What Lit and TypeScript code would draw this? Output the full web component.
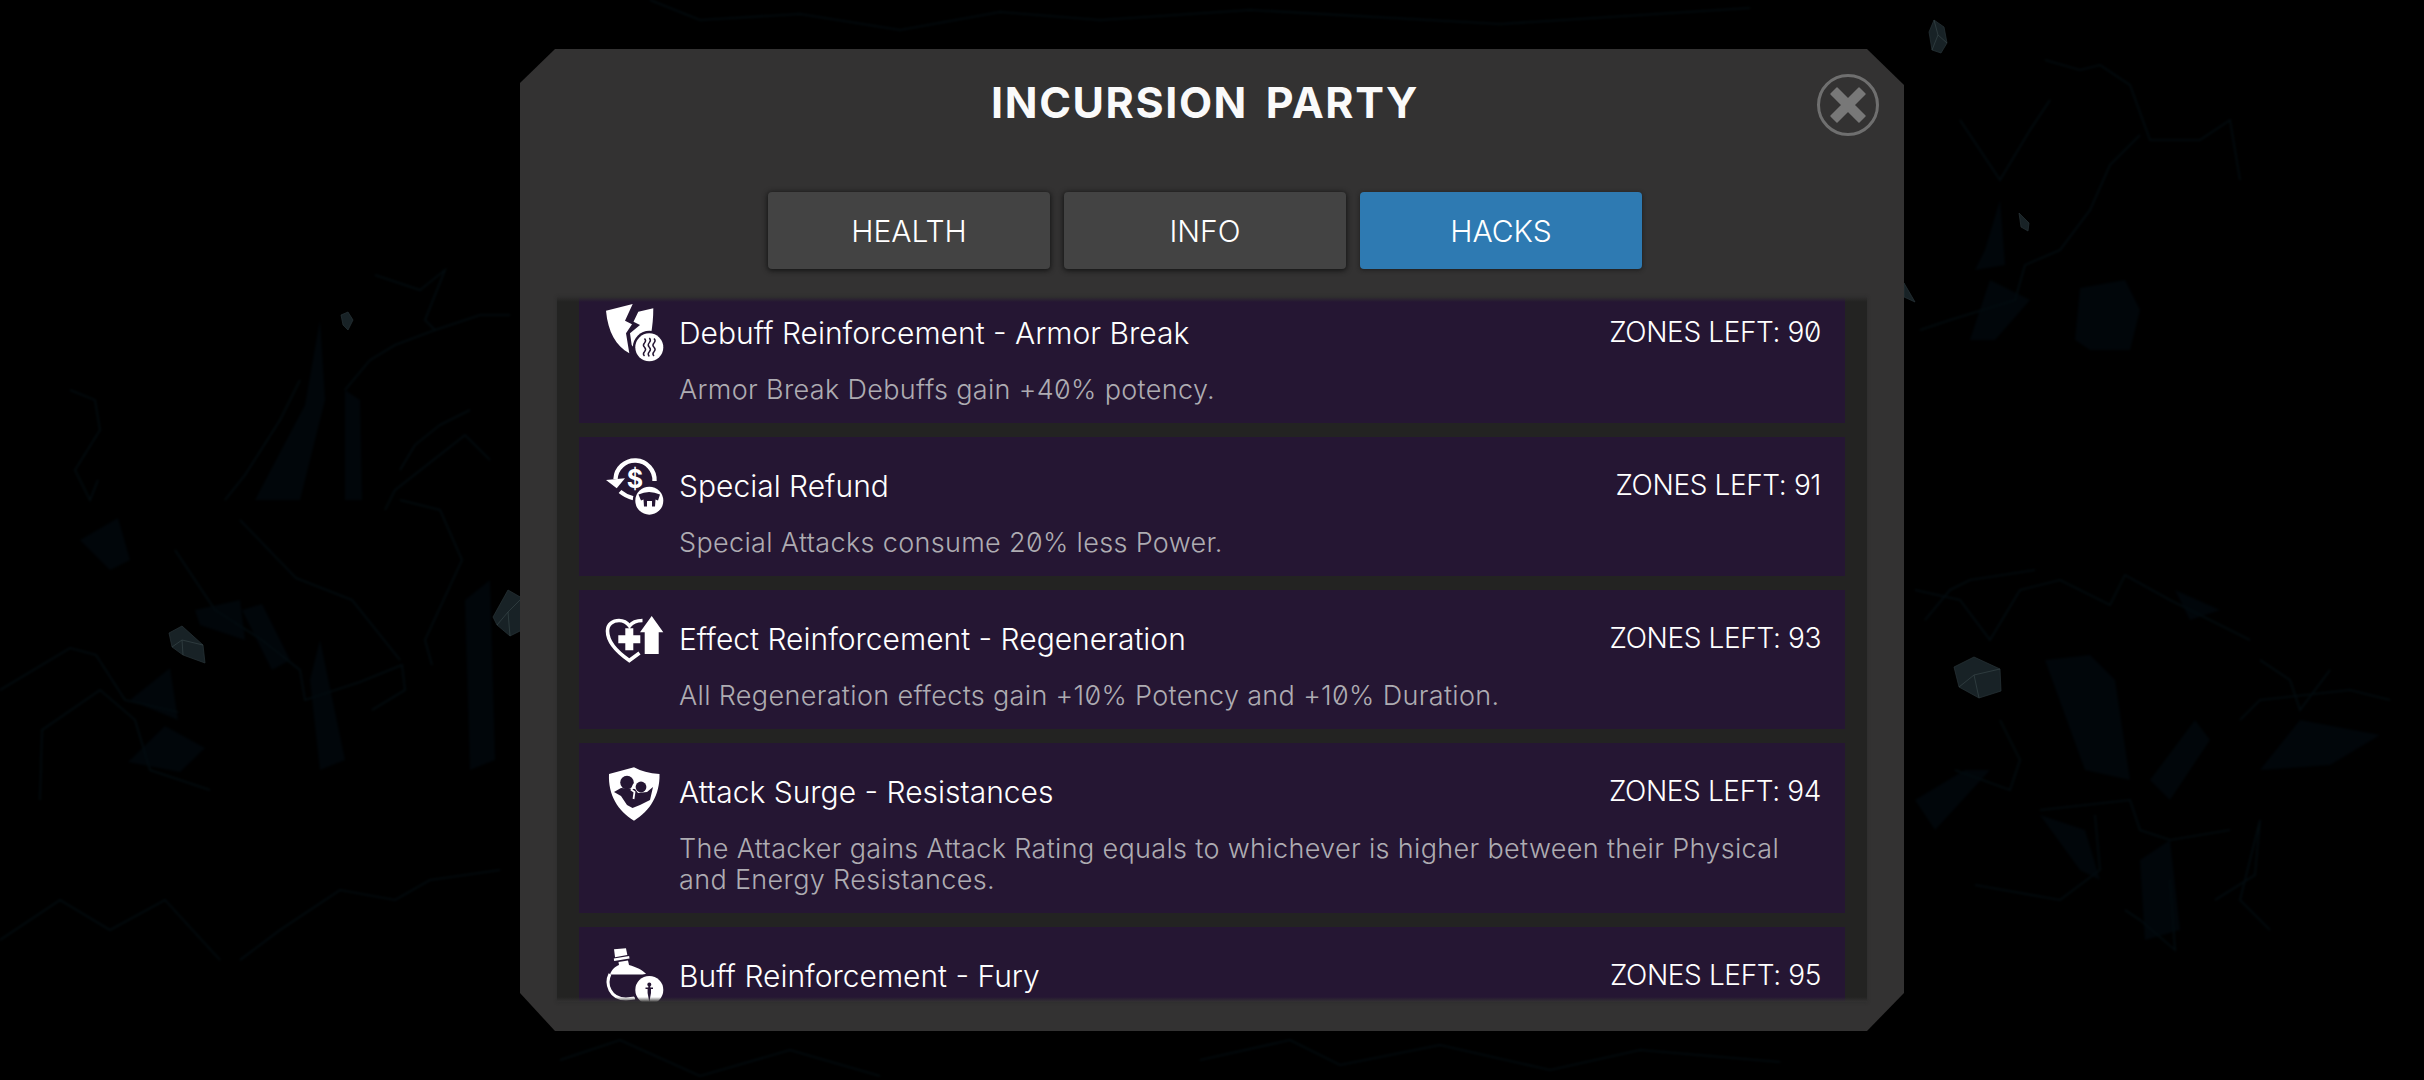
import { LitElement, html, css, svg, nothing } from "lit";
import { customElement } from "lit/decorators.js";

type P = [number, number][];
const pts = (p: P) => p.map((q) => q.join(",")).join(" ");

const crystals: P[] = [
  [[169,633],[182,626],[203,645],[205,663],[183,655],[172,647]],
  [[493,617],[508,590],[522,598],[522,630],[510,636],[497,625]],
  [[1954,667],[1974,657],[2000,669],[2001,691],[1979,698],[1959,687]],
  [[1929,32],[1934,20],[1944,27],[1947,43],[1941,53],[1932,50]],
  [[2019,213],[2029,223],[2028,231],[2021,227]],
  [[1904,283],[1915,302],[1904,297]],
  [[341,315],[348,312],[353,320],[348,330],[343,325]],
];
const facets: [number, number, number, number][] = [
  [182,640,203,645],[182,640,183,655],[172,647,182,640],
  [508,612,522,598],[508,612,510,636],[497,625,508,612],
  [1974,675,1959,687],[1974,675,1979,698],[1974,675,2000,669],
  [1938,35,1947,43],[1938,35,1934,20],[1938,35,1932,50],
];
const shards: P[] = [
  [[80,540],[118,518],[130,560],[110,570]],
  [[195,610],[240,600],[245,640],[200,625]],
  [[242,610],[262,604],[290,660],[272,670]],
  [[128,762],[165,726],[205,748],[180,772]],
  [[130,700],[170,668],[178,720]],
  [[305,405],[320,320],[325,400],[300,500],[255,500]],
  [[345,390],[360,400],[362,500],[345,500]],
  [[310,680],[320,640],[345,760],[320,770]],
  [[465,600],[490,580],[495,760],[470,770]],
  [[1985,250],[2000,200],[2005,265],[1975,270]],
  [[1970,340],[1990,280],[2030,300],[1995,340]],
  [[2075,340],[2080,288],[2125,280],[2140,310],[2130,350],[2090,350]],
  [[2045,660],[2090,655],[2115,680],[2130,780],[2085,770]],
  [[2175,590],[2220,610],[2190,620]],
  [[2040,815],[2085,830],[2100,880],[2080,870]],
  [[1915,800],[1965,770],[1990,770],[1935,830]],
  [[2150,780],[2195,720],[2210,740],[2170,800]],
  [[2260,770],[2300,720],[2380,735],[2330,765]],
  [[2140,860],[2170,840],[2180,930],[2145,940]],
];
const cracks: P[] = [
  [[0,690],[70,648],[96,655],[125,700],[178,712]],
  [[40,800],[42,730],[100,690],[135,720],[150,770],[210,790]],
  [[175,550],[215,610],[262,640],[300,670],[305,700],[360,682],[402,665],[405,690],[372,710]],
  [[240,520],[296,578],[352,600],[400,660]],
  [[400,500],[440,510],[462,560],[425,640],[432,665]],
  [[70,390],[95,400],[100,430],[75,470],[90,500],[98,480]],
  [[300,380],[280,420],[245,475],[225,500]],
  [[375,275],[420,290],[445,270],[425,320],[435,330],[480,315],[510,315]],
  [[435,330],[395,345],[370,360],[345,390]],
  [[470,410],[440,425],[415,445],[400,470]],
  [[490,460],[465,435],[395,490],[385,510]],
  [[1920,330],[1950,320],[2015,300],[2025,265],[2060,250],[2090,210],[2110,165],[2140,135]],
  [[2045,60],[2080,70],[2100,65],[2130,85],[2150,140],[2200,140],[2230,120],[2240,180]],
  [[1960,120],[2000,180],[2030,130],[2050,100]],
  [[1915,590],[1960,600],[1990,640],[2020,590],[2060,580],[2110,605],[2125,575],[2170,600],[2250,640]],
  [[1925,620],[1950,590],[1970,580],[2035,570]],
  [[2000,720],[2020,760],[2010,790],[1955,770]],
  [[2040,810],[2130,800],[2140,830],[2170,840],[2230,830]],
  [[2240,720],[2260,700],[2350,690],[2390,700]],
  [[2260,660],[2290,680],[2300,710],[2330,670]],
  [[2125,910],[2140,920],[2175,950],[2170,880]],
  [[2215,900],[2255,875],[2260,820],[2240,900],[2270,930]],
  [[1975,885],[2060,900],[2100,870],[2095,815]],
  [[240,960],[280,930],[340,890],[395,900],[430,880],[500,870]],
  [[0,940],[60,900],[110,930],[165,900],[220,960]],
  [[560,1060],[620,1040],[700,1076],[790,1050],[880,1076]],
  [[1200,1060],[1290,1040],[1340,1065],[1440,1045],[1550,1070],[1640,1050],[1780,1062]],
  [[650,0],[700,20],[800,14],[900,30],[1000,12],[1100,20],[1250,10],[1500,24],[1750,8]],
];

const bg = svg`
  <g class="soft">
    ${shards.map((s) => svg`<polygon class="shard" points=${pts(s)}></polygon>`)}
    ${cracks.map((c) => svg`<polyline class="crack" points=${pts(c)}></polyline>`)}
  </g>
  ${crystals.map((c) => svg`<polygon class="crystal" points=${pts(c)}></polygon>`)}
  ${facets.map((f) => svg`<line class="facet" x1=${f[0]} y1=${f[1]} x2=${f[2]} y2=${f[3]}></line>`)}
`;

const PURPLE = "#251633";
const badge = (cx: number, cy: number) => svg`
  <circle cx=${cx} cy=${cy} r="16.5" fill=${PURPLE}></circle>
  <circle cx=${cx} cy=${cy} r="14" fill="#fff"></circle>`;

const icons = {
  armor: svg`
    <path fill="#fff" d="M2 6.7 28.7 0 21 16.7 28 20.3 22 29.3 25.3 49.3C12 42 4 28 2 6.7Z"></path>
    <path fill="#fff" d="M34.3 7.7 49.3 4.3C49.3 14 48.5 22 47 31L30 44 27.7 41 26 29.3 36 21 29.5 17.7Z"></path>
    ${badge(45.3, 43.3)}
    <g fill="none" stroke=${PURPLE} stroke-width="1.4">
      <path d="M40.5 34.5q2.2 2.2 0 4.4t0 4.4 0 4.4 0 4.4"></path>
      <path d="M45.3 34q2.2 2.2 0 4.6t0 4.6 0 4.6 0 4.6"></path>
      <path d="M50 34.5q2.2 2.2 0 4.4t0 4.4 0 4.4 0 4.4"></path>
    </g>`,
  refund: svg`
    <path fill="none" stroke="#fff" stroke-width="4.4" d="M11.5 22A19.5 19.5 0 1 1 50.5 24"></path>
    <path fill="#fff" d="M2 23 21 21.3 12.7 31.3Z"></path>
    <path fill="none" stroke="#fff" stroke-width="4.2" d="M16 34.5Q22 39.5 29.3 41.3"></path>
    <text class="glyph" x="31" y="30.5" text-anchor="middle" font-size="25">$</text>
    ${badge(45.3, 43.7)}
    <path fill=${PURPLE} d="M34.5 37.5Q45 32.5 56 37.5L54 43.5 51.5 42.5 51 49.5 48 49.5 48 44 43 44 43 49.5 40 49.5 39.5 42.5 37 43.5Z"></path>`,
  regen: svg`
    <path fill="none" stroke="#fff" stroke-width="3.6" d="M35.5 43 25.3 50.5C13 42 3.5 32 3.5 21 3.5 14 9 10.5 15 10.5 19 10.5 23 12.5 25.5 16 28 12.5 33 10.5 38.5 10.5"></path>
    <path fill="#fff" d="M21.3 18.3h8v7h7v8h-7v7h-8v-7h-7v-8h7Z"></path>
    <path fill="#fff" d="M47.7 6 59.3 22.3H54.7V44H40.7V22.3H36Z"></path>`,
  surge: svg`
    <path fill="#fff" d="M30 4.3Q40 10 55.5 11C56 32 46 48 30 57.7 14 48 4 32 5 11 20 10 30 4.3Z"></path>
    <g fill=${PURPLE}>
      <circle cx="23" cy="19.5" r="6.8"></circle>
      <circle cx="37" cy="24" r="5.4"></circle>
      <path d="M10 29 17 25 31 26 34 30 43 29 49 24 46 37 36 42 28.5 45 23 42 17 33Z"></path>
    </g>
    <path fill="none" stroke="#fff" stroke-width="1.8" d="M30 21 27.5 27 30.5 29 29.5 36"></path>`,
  fury: svg`
    <path fill="#fff" d="M10 2.3 22 1.3 23.3 8 11 10.3Z"></path>
    <path fill="none" stroke="#fff" stroke-width="2.4" d="M10 12.8 25.3 10.2"></path>
    <path fill="#fff" d="M14.5 15 24 13.5 25 18C32 20 39 23 42.7 27.5L6 27.5C8 22 12 19 15 18Z"></path>
    <path fill="none" stroke="#fff" stroke-width="3" d="M6 27C1 37 6 52 22 52L31 51"></path>
    ${badge(45.3, 43)}
    <path fill=${PURPLE} d="M45.3 35.5a2 2 0 0 1 2 2 2 2 0 0 1-1 1.8V40.5H49V42H47L47 46 45.3 55 43.6 46V42H41.5V40.5H44.3V39.3a2 2 0 0 1-1-1.8 2 2 0 0 1 2-2Z"></path>`,
};

const hacks = [
  { icon: icons.armor, title: "Debuff Reinforcement - Armor Break", zones: 90, desc: "Armor Break Debuffs gain +40% potency." },
  { icon: icons.refund, title: "Special Refund", zones: 91, desc: "Special Attacks consume 20% less Power." },
  { icon: icons.regen, title: "Effect Reinforcement - Regeneration", zones: 93, desc: "All Regeneration effects gain +10% Potency and +10% Duration." },
  { icon: icons.surge, title: "Attack Surge - Resistances", zones: 94, desc: "The Attacker gains Attack Rating equals to whichever is higher between their Physical and Energy Resistances." },
  { icon: icons.fury, title: "Buff Reinforcement - Fury", zones: 95, desc: "" },
];

@customElement("app-root")
export class AppRoot extends LitElement {
  static styles = css`
    :host {
      display: flex;
      position: relative;
      width: 2424px;
      height: 1080px;
      overflow: hidden;
      align-items: center;
      justify-content: center;
      background: #000;
      font-family: Inter, "Liberation Sans", sans-serif;
      font-feature-settings: "zero" 1;
      color: #fff;
    }
    .bg { position: absolute; inset: 0; width: 2424px; height: 1080px; }
    .soft { filter: blur(1.2px); }
    .shard { fill: #01060a; }
    .crack { fill: none; stroke: #030c10; stroke-width: 1.6; }
    .crystal { fill: #182226; stroke: #283438; stroke-width: 0.7; }
    .facet { stroke: #364548; stroke-width: 0.7; }
    .modal {
      position: relative;
      box-sizing: border-box;
      width: 1384px;
      height: 982px;
      display: flex;
      flex-direction: column;
      background: #333232;
      clip-path: polygon(35px 0, calc(100% - 37px) 0, 100% 36px, 100% calc(100% - 38px), calc(100% - 37px) 100%, 35px 100%, 0 calc(100% - 38px), 0 34px);
    }
    .title {
      height: 105px;
      flex: none;
      display: flex;
      align-items: center;
      justify-content: center;
      padding-right: 14px;
      font-size: 43px;
      font-weight: 700;
      letter-spacing: 1.6px;
      word-spacing: 6px;
      color: #fafafa;
    }
    .close {
      position: absolute;
      top: 25px;
      right: 25px;
      width: 62px;
      height: 62px;
      box-sizing: border-box;
      border: 3px solid #6f6f6f;
      border-radius: 50%;
      display: flex;
      align-items: center;
      justify-content: center;
    }
    .close svg { width: 40px; height: 40px; display: block; }
    .tabs {
      flex: none;
      display: flex;
      justify-content: center;
      gap: 14px;
      margin-top: 38px;
      margin-right: 14px;
      height: 77px;
    }
    .tab {
      width: 282px;
      border-radius: 4px;
      background: #434343;
      box-shadow: 0 1px 5px 1px #161616;
      display: flex;
      align-items: center;
      justify-content: center;
      font-size: 30px;
      font-weight: 300;
      letter-spacing: 0;
    }
    .tab.on { background: #2e7ab2; box-shadow: 0 1px 4px #1c1c1c; }
    .list {
      position: relative;
      flex: none;
      height: 705px;
      margin: 28px 37px 0;
      padding: 0 22px;
      background: #232322;
      overflow: hidden;
      box-shadow: 0 0 3px #2a2a2a;
    }
    .list::before, .list::after {
      content: "";
      position: absolute;
      left: 0;
      right: 0;
      height: 5px;
      z-index: 1;
    }
    .list::before { top: 0; background: linear-gradient(#2f2e2e, transparent); }
    .list::after { bottom: 0; background: linear-gradient(transparent, #333232); }
    .rows {
      display: flex;
      flex-direction: column;
      gap: 14px;
      margin-top: -13px;
    }
    .row {
      background: #251633;
      display: grid;
      grid-template-columns: 60px 1fr auto;
      column-gap: 15px;
      padding: 29px 24px 18px 25px;
    }
    .icon {
      grid-row: 1 / span 2;
      width: 60px;
      height: 60px;
      margin-top: -9px;
      overflow: visible;
    }
    .glyph { fill: #fff; font-family: Inter, sans-serif; font-weight: 700; }
    .name {
      font-size: 30px;
      line-height: 40px;
      font-weight: 300;
      letter-spacing: 0;
    }
    .zones {
      font-size: 28px;
      line-height: 38px;
      font-weight: 300;
      letter-spacing: -0.37px;
      white-space: nowrap;
    }
    .desc {
      grid-column: 2 / span 2;
      margin-top: 21px;
      font-size: 27px;
      line-height: 31px;
      font-weight: 300;
      letter-spacing: 0.34px;
      color: #aeacb2;
    }
  `;

  render() {
    return html`
      <svg class="bg" viewBox="0 0 2424 1080">${bg}</svg>
      <div class="modal">
        <div class="title">INCURSION PARTY</div>
        <div class="close">
          <svg viewBox="0 0 40 40"><path fill="#787878" d="M9 3 20 14 31 3 37 9 26 20 37 31 31 37 20 26 9 37 3 31 14 20 3 9Z" stroke="#787878" stroke-width="1.5" stroke-linejoin="round"></path></svg>
        </div>
        <div class="tabs">
          <div class="tab">HEALTH</div>
          <div class="tab">INFO</div>
          <div class="tab on">HACKS</div>
        </div>
        <div class="list">
          <div class="rows">
            ${hacks.map((h) => html`
              <div class="row">
                <svg class="icon" viewBox="0 0 60 60">${h.icon}</svg>
                <div class="name">${h.title}</div>
                <div class="zones">ZONES LEFT: ${h.zones}</div>
                ${h.desc ? html`<div class="desc">${h.desc}</div>` : nothing}
              </div>`)}
          </div>
        </div>
      </div>
    `;
  }
}
